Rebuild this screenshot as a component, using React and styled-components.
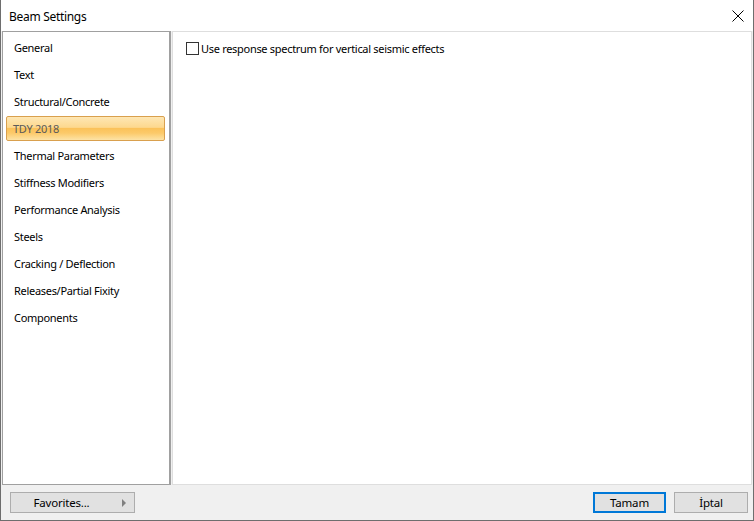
import React, { useState } from "react";
import styled, { createGlobalStyle } from "styled-components";

const GlobalStyle = createGlobalStyle`
  html, body {
    margin: 0;
    padding: 0;
    background: #ffffff;
  }
  body {
    font-family: "Noto Sans", "Open Sans", sans-serif;
    font-size: 11px;
    letter-spacing: -0.3px;
    color: #000;
  }
`;

const categories = [
  "General",
  "Text",
  "Structural/Concrete",
  "TDY 2018",
  "Thermal Parameters",
  "Stiffness Modifiers",
  "Performance Analysis",
  "Steels",
  "Cracking / Deflection",
  "Releases/Partial Fixity",
  "Components",
];

const Window = styled.div`
  width: 754px;
  height: 521px;
  box-sizing: border-box;
  border: 1px solid #6e6e6e;
  border-top: none;
  background: #f0f0f0;
  display: flex;
  flex-direction: column;
`;

const TitleBar = styled.div`
  height: 31px;
  flex-shrink: 0;
  background: #ffffff;
  display: flex;
  align-items: center;
  justify-content: space-between;
  padding: 0 3px 0 8px;
`;

const Title = styled.span`
  font-size: 12px;
  letter-spacing: -0.3px;
  color: #000;
  margin-top: 1px;
`;

const CloseButton = styled.button`
  width: 24px;
  height: 24px;
  border: none;
  background: none;
  padding: 0;
  display: flex;
  align-items: center;
  justify-content: center;
`;

const Body = styled.div`
  flex: 1;
  display: flex;
  padding: 0 1px 0 1px;
  min-height: 0;
`;

const SideList = styled.ul`
  width: 169px;
  box-sizing: border-box;
  margin: 0;
  padding: 3px 3px 0 3px;
  list-style: none;
  background: #ffffff;
  border: 1px solid #a0a0a0;
  border-right: 2px solid #a0a0a0;
  display: flex;
  flex-direction: column;
  gap: 2px;
`;

const ListItem = styled.li`
  height: 25px;
  display: flex;
  align-items: center;
  padding-left: ${(p) => (p.selected ? "6px" : "7px")};
  box-sizing: border-box;
  color: ${(p) => (p.selected ? "#5a5a5a" : "#000")};
  border-radius: 2px;
  border: ${(p) => (p.selected ? "1px solid #d9a04e" : "1px solid transparent")};
  background: ${(p) =>
    p.selected
      ? "linear-gradient(to bottom, #fee7b4 0%, #fdd88e 45%, #fbc25a 50%, #fcca6a 70%, #fde3a6 100%)"
      : "transparent"};
  width: 159px;
`;

const ContentPanel = styled.div`
  flex: 1;
  margin-left: 1px;
  background: #ffffff;
  border: 1px solid #dedede;
  padding: 9px 0 0 13px;
`;

const CheckRow = styled.label`
  display: flex;
  align-items: center;
  gap: 2px;
`;

const CheckBox = styled.span`
  width: 11px;
  height: 11px;
  border: 1px solid #333333;
  background: #ffffff;
`;

const Footer = styled.div`
  height: 35px;
  flex-shrink: 0;
  display: flex;
  align-items: flex-start;
  justify-content: space-between;
  padding: 7px 5px 0 9px;
  box-sizing: border-box;
`;

const Group = styled.div`
  display: flex;
  gap: 8px;
`;

const Button = styled.button`
  height: 21px;
  width: ${(p) => p.w}px;
  box-sizing: border-box;
  background: #e1e1e1;
  border: ${(p) => (p.primary ? "2px solid #0078d7" : "1px solid #adadad")};
  font-family: "Noto Sans", "Open Sans", sans-serif;
  font-size: 11.5px;
  letter-spacing: -0.2px;
  color: #000;
  padding: 0 ${(p) => (p.menu ? "22px" : "0")} 0 0;
  display: flex;
  align-items: center;
  justify-content: center;
  position: relative;
`;

const Arrow = styled.span`
  position: absolute;
  right: 8px;
  top: 6px;
  width: 0;
  height: 0;
  border-top: 4px solid transparent;
  border-bottom: 4px solid transparent;
  border-left: 4px solid #808080;
`;

export default function App() {
  const [selected, setSelected] = useState("TDY 2018");
  return (
    <Window>
      <GlobalStyle />
      <TitleBar>
        <Title>Beam Settings</Title>
        <CloseButton>
          <svg width="12" height="12" viewBox="0 0 12 12">
            <path d="M0.5 0.5 L11.5 11.5 M11.5 0.5 L0.5 11.5" stroke="#000" strokeWidth="1" />
          </svg>
        </CloseButton>
      </TitleBar>
      <Body>
        <SideList>
          {categories.map((c) => (
            <ListItem key={c} selected={c === selected} onClick={() => setSelected(c)}>
              {c}
            </ListItem>
          ))}
        </SideList>
        <ContentPanel>
          <CheckRow>
            <CheckBox />
            Use response spectrum for vertical seismic effects
          </CheckRow>
        </ContentPanel>
      </Body>
      <Footer>
        <Button w={125} menu>
          Favorites...
          <Arrow />
        </Button>
        <Group>
          <Button w={73} primary>
            Tamam
          </Button>
          <Button w={74}>İptal</Button>
        </Group>
      </Footer>
    </Window>
  );
}
